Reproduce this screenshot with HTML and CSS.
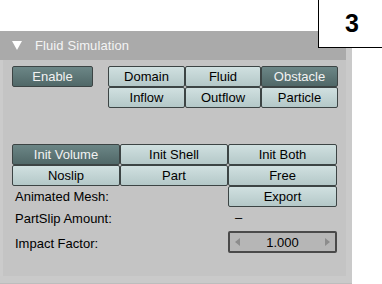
FILE: index.html
```html
<!DOCTYPE html>
<html>
<head>
<meta charset="utf-8">
<link rel="stylesheet" href="styles.css">
</head>
<body>
<div class="page">
  <div class="frame">
    <div class="panel">
      <div class="header">
        <span class="tri"></span>
        <span class="title">Fluid Simulation</span>
      </div>
      <div class="body">
        <div class="row1">
          <div class="btn sel enable">Enable</div>
          <div class="types">
            <div class="btn">Domain</div>
            <div class="btn">Fluid</div>
            <div class="btn sel">Obstacle</div>
            <div class="btn">Inflow</div>
            <div class="btn">Outflow</div>
            <div class="btn">Particle</div>
          </div>
        </div>
        <div class="opts">
          <div class="btn sel">Init Volume</div>
          <div class="btn">Init Shell</div>
          <div class="btn">Init Both</div>
          <div class="btn">Noslip</div>
          <div class="btn">Part</div>
          <div class="btn">Free</div>
          <div class="label">Animated Mesh:</div>
          <div class="btn">Export</div>
          <div class="label slip">PartSlip Amount:</div>
          <div class="dash">–</div>
          <div class="label impact">Impact Factor:</div>
          <div class="num"><span class="arr l"></span><span>1.000</span><span class="arr r"></span></div>
        </div>
      </div>
    </div>
  </div>
  <div class="badge">3</div>
</div>
</body>
</html>
```

FILE: styles.css
```css
html, body {
  margin: 0;
  padding: 0;
  background: #ffffff;
}
.page {
  position: relative;
  width: 382px;
  height: 284px;
  overflow: hidden;
  font-family: "Liberation Sans", Arial, sans-serif;
  font-size: 13px;
  color: #000;
}
.frame {
  margin-top: 31px;
  width: 352px;
  height: 253px;
  background: #cacaca;
  box-sizing: border-box;
  padding-right: 6px;
  padding-bottom: 7px;
  border-bottom: 1px solid #bdbdbd;
}
.panel {
  height: 100%;
  background: #c4c4c4;
  border-left: 3px solid #cbcbcb;
  box-sizing: border-box;
}
.header {
  height: 29px;
  background: #aaaaaa;
  display: flex;
  align-items: center;
  margin-left: -3px;
}
.tri {
  width: 0;
  height: 0;
  margin-left: 12px;
  border-left: 5px solid transparent;
  border-right: 5px solid transparent;
  border-top: 9px solid #ffffff;
}
.title {
  margin-left: 13px;
  color: #f4f4f4;
  letter-spacing: 0.1px;
}
.body {
  padding: 6px 0 0 9px;
}
.row1 {
  display: flex;
  align-items: flex-start;
}
.btn {
  height: 21px;
  box-sizing: border-box;
  border: 1px solid #3c4444;
  border-radius: 2px;
  background: linear-gradient(#d0e0e0, #b4c8c8);
  display: flex;
  align-items: center;
  justify-content: center;
  white-space: nowrap;
}
.btn.sel {
  background: linear-gradient(#6c8686, #506868);
  color: #f2f2f2;
}
.enable {
  width: 81px;
}
.types {
  margin-left: 15px;
  display: grid;
  grid-template-columns: 77px 76px 77px;
  grid-auto-rows: 21px;
}
.opts {
  margin-top: 36px;
  width: 325px;
  display: grid;
  grid-template-columns: 108px 108px 109px;
  grid-auto-rows: 21px;
}
.label {
  grid-column: 1 / 3;
  display: flex;
  align-items: center;
  padding-left: 3px;
}
.slip {
  margin-top: 2px;
}
.dash {
  display: flex;
  align-items: center;
  padding-left: 7px;
}
.impact {
  margin-top: 4px;
  height: 22px;
}
.num {
  margin-top: 3px;
  height: 22px;
  box-sizing: border-box;
  border: 2px solid #4a4a4a;
  border-radius: 2px;
  background: #b6b6b6;
  display: flex;
  align-items: center;
  justify-content: space-between;
  padding: 0 5px;
}
.arr {
  width: 0;
  height: 0;
  border-top: 4px solid transparent;
  border-bottom: 4px solid transparent;
}
.arr.l { border-right: 5px solid #8c8c8c; }
.arr.r { border-left: 5px solid #8c8c8c; }
.badge {
  position: absolute;
  left: 318px;
  top: -2px;
  width: 66px;
  height: 50px;
  box-sizing: border-box;
  border: 1px solid #000;
  background: #fff;
  display: flex;
  align-items: center;
  justify-content: center;
  font-weight: bold;
  font-size: 25px;
  padding-left: 2px;
}
```
